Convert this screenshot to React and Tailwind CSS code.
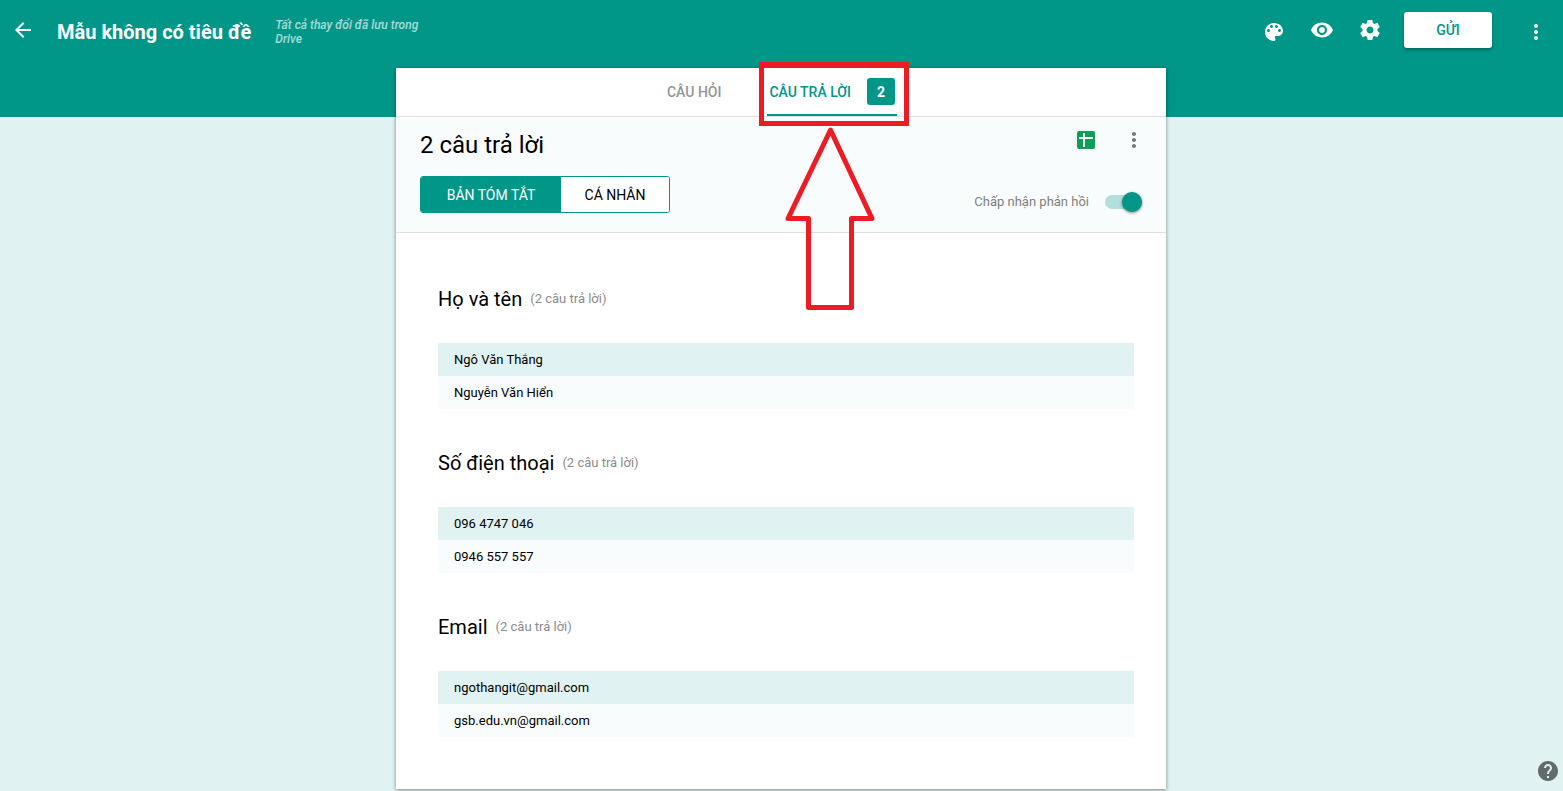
import React from "react";

const ICONS = {
  back: "M20 11H7.83l5.59-5.59L12 4l-8 8 8 8 1.41-1.41L7.83 13H20v-2z",
  palette:
    "M12 3c-4.97 0-9 4.03-9 9s4.03 9 9 9c.83 0 1.5-.67 1.5-1.5 0-.39-.15-.74-.39-1.01-.23-.26-.38-.61-.38-.99 0-.83.67-1.5 1.5-1.5H16c2.76 0 5-2.24 5-5 0-4.42-4.03-8-9-8zm-5.5 9c-.83 0-1.5-.67-1.5-1.5S5.67 9 6.5 9 8 9.67 8 10.5 7.33 12 6.5 12zm3-4C8.67 8 8 7.33 8 6.5S8.67 5 9.5 5s1.5.67 1.5 1.5S10.33 8 9.5 8zm5 0c-.83 0-1.5-.67-1.5-1.5S13.67 5 14.5 5s1.5.67 1.5 1.5S15.33 8 14.5 8zm3 4c-.83 0-1.5-.67-1.5-1.5S16.67 9 17.5 9s1.5.67 1.5 1.5-.67 1.5-1.5 1.5z",
  eye: "M12 4.5C7 4.5 2.73 7.61 1 12c1.73 4.39 6 7.5 11 7.5s9.27-3.11 11-7.5c-1.73-4.39-6-7.5-11-7.5zM12 17c-2.76 0-5-2.24-5-5s2.24-5 5-5 5 2.24 5 5-2.24 5-5 5zm0-8c-1.66 0-3 1.34-3 3s1.34 3 3 3 3-1.34 3-3-1.34-3-3-3z",
  settings:
    "M19.43 12.98c.04-.32.07-.64.07-.98s-.03-.66-.07-.98l2.11-1.65c.19-.15.24-.42.12-.64l-2-3.46c-.12-.22-.39-.3-.61-.22l-2.49 1c-.52-.4-1.08-.73-1.69-.98l-.38-2.65C14.46 2.18 14.25 2 14 2h-4c-.25 0-.46.18-.49.42l-.38 2.65c-.61.25-1.17.59-1.69.98l-2.49-1c-.23-.09-.49 0-.61.22l-2 3.46c-.13.22-.07.49.12.64l2.11 1.65c-.04.32-.07.65-.07.98s.03.66.07.98l-2.11 1.65c-.19.15-.24.42-.12.64l2 3.46c.12.22.39.3.61.22l2.49-1c.52.4 1.08.73 1.69.98l.38 2.65c.03.24.24.42.49.42h4c.25 0 .46-.18.49-.42l.38-2.65c.61-.25 1.17-.59 1.69-.98l2.49 1c.23.09.49 0 .61-.22l2-3.46c.12-.22.07-.49-.12-.64l-2.11-1.65zM12 15.5c-1.93 0-3.5-1.57-3.5-3.5s1.57-3.5 3.5-3.5 3.5 1.57 3.5 3.5-1.57 3.5-3.5 3.5z",
  more: "M12 8c1.1 0 2-.9 2-2s-.9-2-2-2-2 .9-2 2 .9 2 2 2zm0 2c-1.1 0-2 .9-2 2s.9 2 2 2 2-.9 2-2-.9-2-2-2zm0 6c-1.1 0-2 .9-2 2s.9 2 2 2 2-.9 2-2-.9-2-2-2z",
  help: "M12 2C6.48 2 2 6.48 2 12s4.48 10 10 10 10-4.48 10-10S17.52 2 12 2zm1 17h-2v-2h2v2zm2.07-7.75l-.9.92C13.45 12.9 13 13.5 13 15h-2v-.5c0-1.1.45-2.1 1.17-2.83l1.24-1.26c.37-.36.59-.86.59-1.41 0-1.1-.9-2-2-2s-2 .9-2 2H8c0-2.21 1.79-4 4-4s4 1.79 4 4c0 .88-.36 1.68-.93 2.25z",
};

function Icon({ name }) {
  return (
    <svg viewBox="0 0 24 24" className="block size-6 fill-current" aria-hidden="true">
      <path d={ICONS[name]} />
    </svg>
  );
}

function IconButton({ name, label, className = "" }) {
  return (
    <button type="button" aria-label={label} className={`shrink-0 cursor-pointer ${className}`}>
      <Icon name={name} />
    </button>
  );
}

const QUESTIONS = [
  { title: "Họ và tên", answers: ["Ngô Văn Thắng", "Nguyễn Văn Hiển"] },
  { title: "Số điện thoại", answers: ["096 4747 046", "0946 557 557"] },
  { title: "Email", answers: ["ngothangit@gmail.com", "gsb.edu.vn@gmail.com"] },
];

function Header() {
  return (
    <header className="flex h-[117px] items-start justify-between bg-[#009688] pr-[15px] pl-[11px] text-white">
      <div className="flex items-start pt-[18px]">
        <IconButton name="back" label="Quay lại" />
        <h1 className="ml-[22px] text-xl leading-7 font-bold whitespace-nowrap">Mẫu không có tiêu đề</h1>
        <p className="ml-6 w-[150px] text-xs leading-[14px] font-medium text-white/65 italic">
          Tất cả thay đổi đã lưu trong Drive
        </p>
      </div>
      <div className="flex items-center pt-3">
        <IconButton name="palette" label="Bảng màu" className="pt-1" />
        <IconButton name="eye" label="Xem trước" className="ml-6" />
        <IconButton name="settings" label="Cài đặt" className="ml-6" />
        <button
          type="button"
          className="ml-[22px] h-9 w-[88px] cursor-pointer rounded-[3px] bg-white text-sm font-medium text-[#009688] shadow-[0_2px_3px_rgba(0,0,0,0.3)]"
        >
          GỬI
        </button>
        <IconButton name="more" label="Tùy chọn khác" className="ml-8 pt-1" />
      </div>
    </header>
  );
}

function Highlight() {
  return (
    <>
      <span className="pointer-events-none absolute -top-1.5 -right-3 -bottom-3 -left-2 z-10 border-[5px] border-[#ed1c24]" />
      <svg
        viewBox="0 0 92 186"
        className="pointer-events-none absolute top-[57px] left-[17px] z-10 h-[186px] w-[92px] max-w-none"
        fill="none"
        stroke="#ed1c24"
        strokeWidth="5"
        strokeLinejoin="round"
        aria-hidden="true"
      >
        <path d="M46.5 5L88 93.500H67.500V182.500H24.500V93.500H4Z" />
      </svg>
    </>
  );
}

function Tabs() {
  return (
    <nav className="flex h-[49px] justify-center border-b border-[#e0e0e0] pr-1.5 text-sm font-medium">
      <a href="#questions" className="flex items-center px-2 text-[#949494]">
        CÂU HỎI
      </a>
      <a
        href="#responses"
        aria-current="page"
        className="relative ml-[38px] flex items-center gap-4 border-b-2 border-[#009688] px-0.5 text-[#009688]"
      >
        <span className="pt-0.5">CÂU TRẢ LỜI</span>
        <span className="flex h-[27px] w-7 items-center justify-center rounded-[3px] bg-[#009688] pt-0.5 font-bold text-white">
          2
        </span>
        <Highlight />
      </a>
    </nav>
  );
}

function Summary() {
  return (
    <section className="border-b border-[#e0e0e0] bg-[#f8fcfd] pt-[11px] pr-5 pb-[19px] pl-6">
      <div className="flex items-start justify-between">
        <h2 className="text-2xl leading-[34px] text-black">2 câu trả lời</h2>
        <div className="flex items-center gap-[27px]">
          <button type="button" aria-label="Tạo bảng tính" className="cursor-pointer">
            <svg viewBox="0 0 18 18" className="block size-[18px]" aria-hidden="true">
              <rect width="18" height="18" rx="2" fill="#0f9d58" />
              <path d="M2 6h14v2H8v8H6V8H2zM6 2h2v5H6z" fill="#fff" />
            </svg>
          </button>
          <IconButton name="more" label="Tùy chọn câu trả lời" className="text-[#757575]" />
        </div>
      </div>
      <div className="mt-3.5 flex items-center justify-between">
        <div className="flex h-[37px] overflow-hidden rounded-[3px] border border-[#009688] text-sm">
          <button type="button" className="w-[140px] cursor-pointer bg-[#009688] text-white">
            BẢN TÓM TẮT
          </button>
          <button type="button" className="w-[108px] cursor-pointer bg-white text-black">
            CÁ NHÂN
          </button>
        </div>
        <label className="mt-3.5 flex cursor-pointer items-center gap-4 pr-1 text-[13px] leading-5 text-[#808080]">
          Chấp nhận phản hồi
          <input type="checkbox" role="switch" defaultChecked className="peer sr-only" />
          <span className="flex h-3.5 w-[37px] items-center rounded-full bg-[#b2dfdb] peer-checked:justify-end">
            <span className="size-5 rounded-full bg-[#009688] shadow-[0_1px_3px_rgba(0,0,0,0.5)]" />
          </span>
        </label>
      </div>
    </section>
  );
}

function Question({ title, answers }) {
  return (
    <section>
      <h3 className="flex items-center gap-2 text-xl leading-7 text-black">
        {title}
        <span className="text-[13px] text-[#8c8c8c]">({answers.length} câu trả lời)</span>
      </h3>
      <ul className="mt-[30px] text-[13px] leading-[33px] text-black">
        {answers.map((answer) => (
          <li key={answer} className="bg-[#f8fcfd] px-4 odd:bg-[#e0f2f1]">
            {answer}
          </li>
        ))}
      </ul>
    </section>
  );
}

export default function App() {
  return (
    <div className="min-h-screen bg-[#e0f2f1] font-[Roboto,'Liberation_Sans',sans-serif]">
      <Header />
      <div className="-mt-[49px] pr-px">
        <main className="mx-auto max-w-[770px] bg-white shadow-[0_1px_4px_rgba(0,0,0,0.45)]">
          <Tabs />
          <Summary />
          <div className="flex flex-col gap-10 pt-[52px] pr-8 pb-[52px] pl-[42px]">
            {QUESTIONS.map((question) => (
              <Question key={question.title} {...question} />
            ))}
          </div>
        </main>
      </div>
      <button
        type="button"
        aria-label="Trợ giúp"
        className="fixed right-[3px] bottom-2 cursor-pointer text-[#616b6a]"
      >
        <Icon name="help" />
      </button>
    </div>
  );
}
